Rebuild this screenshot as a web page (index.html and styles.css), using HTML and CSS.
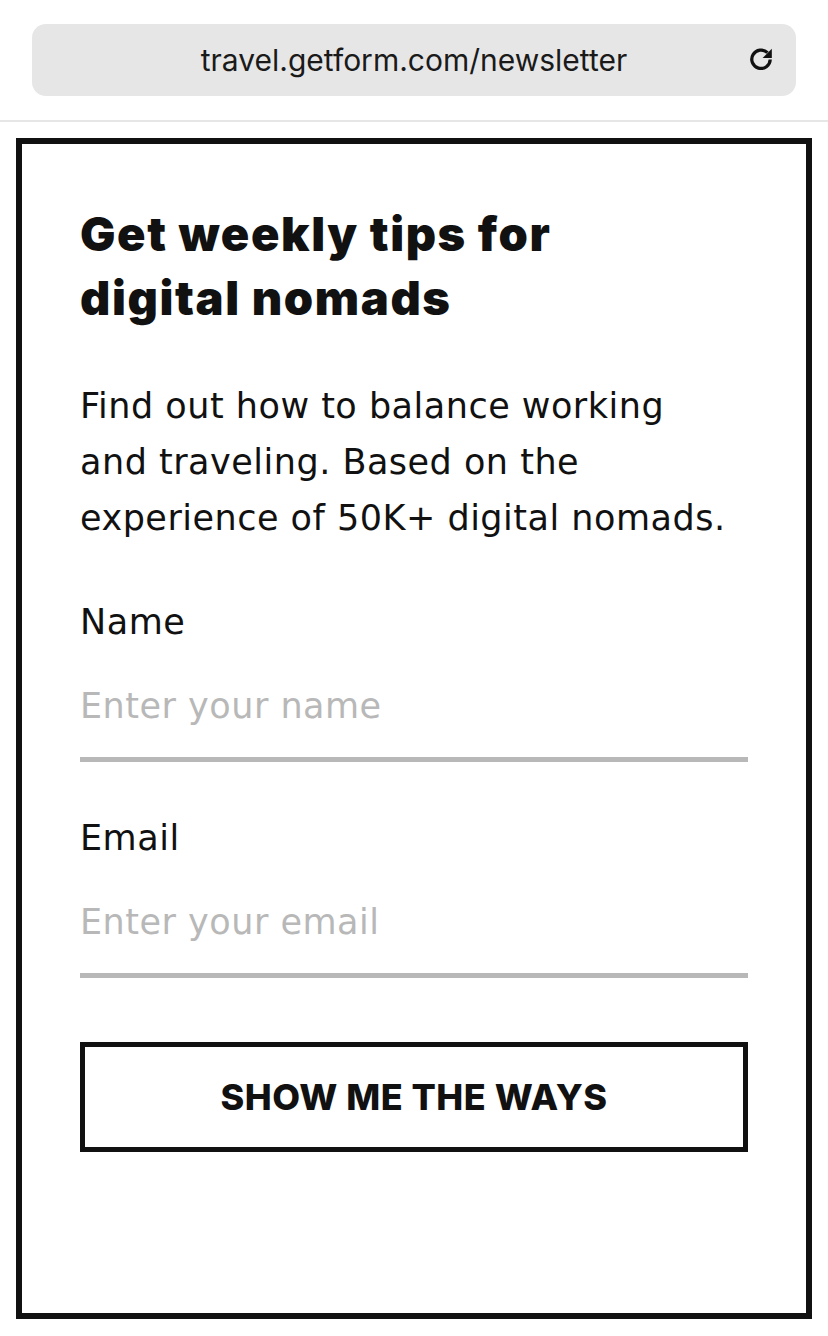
FILE: index.html
```html
<!DOCTYPE html>
<html lang="en">
<head>
  <meta charset="UTF-8" />
  <meta name="viewport" content="width=device-width, initial-scale=1.0"/>
  <title>Newsletter</title>
  <link rel="stylesheet" href="styles.css">
</head>
<body>

  <div class="browser-top">
    <div class="url-bar">
      <span class="url-text">travel.getform.com/newsletter</span>
      <svg class="reload" viewBox="0 0 24 24" width="26" height="26">
        <path d="M20.5 12.5a8.5 8.5 0 1 1-2.5-6.3" fill="none" stroke="#111" stroke-width="3"/>
        <path d="M22 2.5v8.5h-8.5z" fill="#111"/>
      </svg>
    </div>
  </div>

  <div class="frame">
    <h1>Get weekly tips for digital nomads</h1>

    <p class="intro">Find out how to balance working and traveling. Based on the experience of 50K+ digital nomads.</p>

    <form class="signup" onsubmit="return false">
      <div class="field">
        <label for="name">Name</label>
        <input type="text" id="name" placeholder="Enter your name" />
      </div>
      <div class="field">
        <label for="email">Email</label>
        <input type="email" id="email" placeholder="Enter your email" />
      </div>
      <button type="submit">SHOW ME THE WAYS</button>
    </form>
  </div>

</body>
</html>
```

FILE: styles.css
```css
body {
  margin: 0;
  background-color: #fff;
  color: #111;
  font-family: "DejaVu Sans", sans-serif;
}

.browser-top {
  padding: 24px 32px;
  border-bottom: 2px solid #e6e6e6;
}

.url-bar {
  position: relative;
  height: 72px;
  background-color: #e6e6e6;
  border-radius: 14px;
  display: flex;
  align-items: center;
  justify-content: center;
}

.url-text {
  font-family: Inter, sans-serif;
  font-size: 30px;
  color: #1a1a1a;
}

.reload {
  position: absolute;
  right: 22px;
  top: 22px;
}

.frame {
  margin: 16px 16px 0 16px;
  border: 6px solid #111;
  padding: 58px 58px 0 58px;
  box-sizing: border-box;
  height: 1181px;
}

h1 {
  margin: 0;
  font-family: Inter, sans-serif;
  font-weight: 900;
  font-size: 47px;
  line-height: 64px;
  letter-spacing: 1.6px;
  width: 530px;
}

.intro {
  margin: 48px 0 0 0;
  max-width: 652px;
  font-size: 35px;
  line-height: 56px;
  letter-spacing: 0.5px;
}

.signup {
  margin-top: 56px;
  display: flex;
  flex-direction: column;
}

.field {
  display: flex;
  flex-direction: column;
  gap: 24px;
  margin-bottom: 56px;
}

label {
  font-size: 35px;
  line-height: 40px;
  letter-spacing: 0.5px;
}

input {
  font-family: inherit;
  font-size: 35px;
  line-height: 40px;
  letter-spacing: 0.5px;
  padding: 20px 0 31px 0;
  border: none;
  border-bottom: 5px solid #b8b8b8;
  outline: none;
  color: #111;
  background: none;
}

input::placeholder {
  color: #b8b8b8;
}

button {
  margin-top: 8px;
  height: 110px;
  background-color: #fff;
  border: 5px solid #111;
  font-family: Inter, sans-serif;
  font-weight: 800;
  font-size: 36px;
  letter-spacing: 0.5px;
  color: #111;
  cursor: pointer;
}
```
